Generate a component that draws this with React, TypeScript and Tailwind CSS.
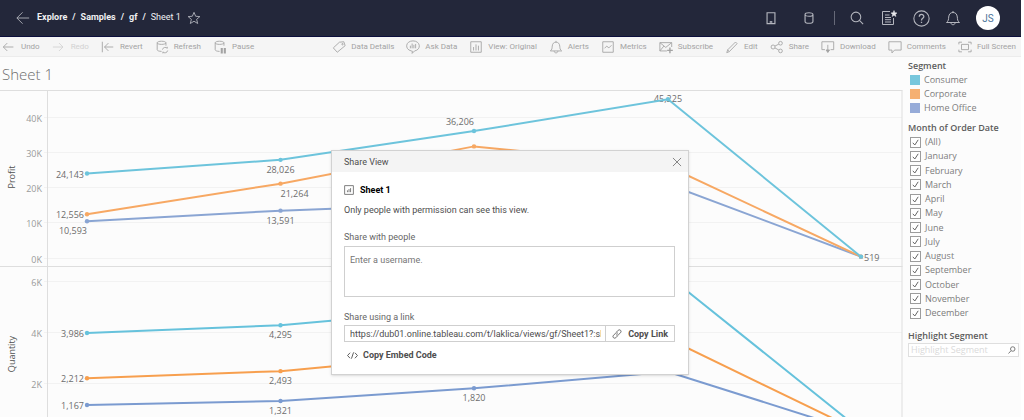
import { ReactNode } from "react";

interface IconProps {
    size?: string;
    stroke?: number;
    children: ReactNode;
}

function Icon({ size = "size-3.5", stroke = 1, children }: IconProps) {
    return (
        <svg
            viewBox="0 0 16 16"
            className={`${size} shrink-0`}
            fill="none"
            stroke="currentColor"
            strokeWidth={stroke}
            aria-hidden="true"
        >
            {children}
        </svg>
    );
}

const bellPath = "M1.5 12.5 C3.5 11 3.5 9.5 3.7 7 C4 4 5.5 2.5 8 2.5 C10.5 2.5 12 4 12.3 7 C12.5 9.5 12.5 11 14.5 12.5 Z M6 12.5 V13 C6 15.3 10 15.3 10 13 V12.5 M8 2.5 V1";
const cylinder = (
    <path d="M7.5 13 C4.5 13 2.5 12.2 2.5 11 V3.2 C2.5 0.8 12.5 0.8 12.5 3.2 V6.5 M2.5 3.2 C2.5 5.6 12.5 5.6 12.5 3.2" />
);

interface ToolItem {
    label: string;
    icon: ReactNode;
    disabled?: boolean;
}

const historyTools: ToolItem[] = [
    { label: "Undo", icon: <path d="M13 8 H1.5 M6 3.5 L1.5 8 L6 12.5" /> },
    { label: "Redo", icon: <path d="M1 8 H12.5 M8 3.5 L12.5 8 L8 12.5" />, disabled: true },
    { label: "Revert", icon: <path d="M1.5 2 V14 M14 8 H4 M8.5 3.5 L4 8 L8.5 12.5" /> },
    {
        label: "Refresh",
        icon: <>{cylinder}<path d="M8.5 11 A3.2 3.2 0 0 1 14 9.5 V7.8 M14.5 12 A3.2 3.2 0 0 1 9 13.6 V15.3" /></>,
    },
    {
        label: "Pause",
        icon: <>{cylinder}<path d="M10 9 V15.5 M13.5 9 V15.5" strokeWidth="2.4" /></>,
    },
];

const viewTools: ToolItem[] = [
    {
        label: "Data Details",
        icon: <><path d="M8.5 2.5 L13.5 2 L15 6.5 L6 14 L1.5 9 Z" /><circle cx="12" cy="4.8" r="0.8" /></>,
    },
    {
        label: "Ask Data",
        icon: <path d="M6 12.5 C-2 10.5 -0.5 1 8 1 C16.5 1 18 11 9.8 12.5 L7 15.3 L7.3 12.8 Z M5 6.5 V9.5 M7 4 V9.5 M9 5.5 V9.5 M11 4.5 V9.5" />,
    },
    {
        label: "View: Original",
        icon: <path d="M2 2 H14 V14 H2 Z M5.2 8 V12 M8 5 V12 M10.8 6.5 V12" />,
    },
    { label: "Alerts", icon: <path d={bellPath} /> },
    { label: "Metrics", icon: <path d="M2 2 H14 V14 H2 Z M4 9.5 L6.5 7 L9 9 L12 6" /> },
    {
        label: "Subscribe",
        icon: <><path d="M9 12.5 H1 V3 H14.5 V8 M1 3 L7.7 8.5 L14.5 3 M1 12.5 L5.5 7" /><path d="M12.5 8.5 V15 M9.3 11.8 H15.8" strokeWidth="1.6" /></>,
    },
    { label: "Edit", icon: <path d="M2 14.5 L3 11.3 L12 2.3 L13.8 4.2 L5 13.2 Z M3 11.3 L5 13.2" /> },
    {
        label: "Share",
        icon: <><circle cx="3.5" cy="8" r="2.3" /><circle cx="12" cy="3.7" r="2.1" /><circle cx="12" cy="12.5" r="2.1" /><path d="M5.7 6.9 L10.1 4.7 M5.6 9 L10.1 11.5" /></>,
    },
    {
        label: "Download",
        icon: <><path d="M4.5 11 H1 V2 H14.5 V11 H11 M7.8 5.5 V14" /><path d="M5.8 11.4 H9.8 L7.8 14.2 Z" fill="currentColor" /></>,
    },
    { label: "Comments", icon: <path d="M1 2 H15 V11.5 H7.5 L4.5 14.8 V11.5 H1 Z" /> },
    {
        label: "Full Screen",
        icon: <path d="M4 5 H12 V11 H4 Z M1 5 V2.5 H4.5 M11.5 2.5 H15 V5 M15 11 V13.5 H11.5 M4.5 13.5 H1 V11" />,
    },
];

function Tool({ label, icon, disabled }: ToolItem) {
    return (
        <button
            type="button"
            disabled={disabled}
            className="flex shrink-0 items-center gap-[5px] text-[#a3a3a3] disabled:text-[#d2d2d2]"
        >
            <Icon>{icon}</Icon>
            {label}
        </button>
    );
}

function TopBar() {
    return (
        <header className="flex h-[37px] items-center border-b border-[#0c0f3c] bg-[#23273a] pl-4 pr-[21px] text-white">
            <button type="button" aria-label="Back" className="text-[#b4b6be]">
                <Icon><path d="M15 8 H1 M7.5 1.5 L1 8 L7.5 14.5" /></Icon>
            </button>
            <nav className="ml-[7px] flex gap-[5px] text-[9px] font-bold text-[#f0f0f2]">
                <a href="#explore">Explore</a>
                <span>/</span>
                <a href="#samples">Samples</a>
                <span>/</span>
                <a href="#gf">gf</a>
                <span>/</span>
                <span className="font-normal">Sheet 1</span>
            </nav>
            <button type="button" aria-label="Favorite" className="ml-1.5 text-[#b4b6be]">
                <Icon><path d="M8 1.5 L9.9 6 L14.7 6.4 L11 9.5 L12.2 14.3 L8 11.7 L3.8 14.3 L5 9.5 L1.3 6.4 L6.1 6 Z" /></Icon>
            </button>
            <div className="ml-auto flex items-center text-[#b4b6be]">
                <button type="button" aria-label="Devices" className="flex w-[38px] justify-center">
                    <Icon><path d="M3.5 2 H12.5 V14.5 H3.5 Z" strokeWidth="1.3" /><path d="M6.5 12.5 H9.5" strokeWidth="1.8" /></Icon>
                </button>
                <button type="button" aria-label="Data source" className="flex w-[38px] justify-center">
                    <Icon><path d="M3.5 4 V12 C3.5 14.7 12.5 14.7 12.5 12 V4 C12.5 1.3 3.5 1.3 3.5 4 C3.5 6.7 12.5 6.7 12.5 4" strokeWidth="1.3" /></Icon>
                </button>
                <span className="mx-1.5 h-3.5 w-px bg-[#666978]" />
                <button type="button" aria-label="Search" className="flex w-8 justify-center">
                    <Icon><circle cx="6.8" cy="6.8" r="5.5" strokeWidth="1.2" /><path d="M10.8 10.8 L15 15" strokeWidth="1.2" /></Icon>
                </button>
                <button type="button" aria-label="What's new" className="flex w-8 justify-center">
                    <Icon size="size-4">
                        <path d="M9 1.5 H1.5 V14.5 H12.5 V8 M4 5 H8.5 M4 7.5 H10 M4 9.7 H10 M4 12 H10" />
                        <path
                            d="M13 0.5 L13.9 2.7 L16 2.9 L14.4 4.3 L14.9 6.5 L13 5.3 L11.1 6.5 L11.6 4.3 L10 2.9 L12.1 2.7 Z"
                            fill="#e8e8ec"
                            stroke="#e8e8ec"
                            strokeWidth="0.5"
                        />
                    </Icon>
                </button>
                <button type="button" aria-label="Help" className="flex w-8 justify-center">
                    <Icon size="size-[17px]">
                        <circle cx="8" cy="8" r="7.2" />
                        <path d="M5.9 6.3 C5.9 3.3 10.2 3.5 10.2 6.1 C10.2 7.8 8 7.9 8 9.8 M8 11 V12.3" strokeWidth="1.2" />
                    </Icon>
                </button>
                <button type="button" aria-label="Notifications" className="flex w-8 justify-center">
                    <Icon size="size-4"><path d={bellPath} /></Icon>
                </button>
                <button
                    type="button"
                    className="ml-[7px] size-6 rounded-full bg-white text-[10px] text-[#4c7499]"
                >
                    JS
                </button>
            </div>
        </header>
    );
}

interface Series {
    color: string;
    values: number[];
    labels?: { index: number; dx: number; dy: number; anchor?: "start" | "middle" | "end" }[];
}

interface Pane {
    title: string;
    titleY: number;
    zeroY: number;
    perThousand: number;
    ticks: number[];
    series: Series[];
}

const monthX = [87, 280.5, 474, 668, 861];

const panes: Pane[] = [
    {
        title: "Profit",
        titleY: 87,
        zeroY: 168.5,
        perThousand: 3.52,
        ticks: [40, 30, 20, 10, 0],
        series: [
            {
                color: "#8aa5d3",
                values: [10593, 13591, 15700, 21100, 519],
                labels: [
                    { index: 0, dx: 0, dy: 13, anchor: "end" },
                    { index: 1, dx: 0, dy: 13 },
                ],
            },
            {
                color: "#f7a863",
                values: [12556, 21264, 31850, 26200, 519],
                labels: [
                    { index: 0, dx: -3, dy: 4, anchor: "end" },
                    { index: 1, dx: 0, dy: 13, anchor: "start" },
                ],
            },
            {
                color: "#6dc4dc",
                values: [24143, 28026, 36206, 45225, 519],
                labels: [
                    { index: 0, dx: -3, dy: 4, anchor: "end" },
                    { index: 1, dx: 0, dy: 13 },
                    { index: 2, dx: 0, dy: -6, anchor: "end" },
                    { index: 3, dx: 0, dy: 3 },
                    { index: 4, dx: 3, dy: 4, anchor: "start" },
                ],
            },
        ],
    },
    {
        title: "Quantity",
        titleY: 264,
        zeroY: 344.7,
        perThousand: 25.5,
        ticks: [6, 4, 2],
        series: [
            {
                color: "#7b9bd0",
                values: [1167, 1321, 1820, 2470, 70],
                labels: [
                    { index: 0, dx: -3, dy: 4, anchor: "end" },
                    { index: 1, dx: 0, dy: 13 },
                    { index: 2, dx: 0, dy: 13 },
                ],
            },
            {
                color: "#f79f4e",
                values: [2212, 2493, 3200, 3772, 105],
                labels: [
                    { index: 0, dx: -3, dy: 4, anchor: "end" },
                    { index: 1, dx: 0, dy: 13 },
                ],
            },
            {
                color: "#66c2dc",
                values: [3986, 4295, 4970, 6235, 170],
                labels: [
                    { index: 0, dx: -3, dy: 4, anchor: "end" },
                    { index: 1, dx: 0, dy: 13 },
                ],
            },
        ],
    },
];

function ChartPane({ pane }: { pane: Pane }) {
    const yOf = (value: number) => pane.zeroY - (value / 1000) * pane.perThousand;

    return (
        <g>
            <text
                transform={`translate(15 ${pane.titleY}) rotate(-90)`}
                textAnchor="middle"
                fill="#4f4f4f"
            >
                {pane.title}
            </text>
            {pane.ticks.map((tick) => (
                <g key={tick}>
                    <path d={`M44 ${Math.round(yOf(tick * 1000)) - 0.5} H902`} stroke="#f2f2f2" />
                    <text x="42" y={yOf(tick * 1000) + 4} textAnchor="end" fill="#9a9a9a">
                        {tick}K
                    </text>
                </g>
            ))}
            {pane.series.map((s) =>
                s.labels?.map((l) => (
                    <text
                        key={s.color + l.index}
                        x={monthX[l.index] + l.dx}
                        y={yOf(s.values[l.index]) + l.dy}
                        textAnchor={l.anchor ?? "middle"}
                        fill="#6c6c6c"
                    >
                        {s.values[l.index].toLocaleString("en-US")}
                    </text>
                ))
            )}
            {pane.series.map((s) => (
                <g key={s.color}>
                    <polyline
                        points={s.values.map((v, i) => `${monthX[i]},${yOf(v)}`).join(" ")}
                        fill="none"
                        stroke={s.color}
                        strokeWidth="2"
                    />
                    {s.values.map((v, i) => (
                        <circle key={i} cx={monthX[i]} cy={yOf(v)} r="2.2" fill={s.color} />
                    ))}
                </g>
            ))}
        </g>
    );
}

function Chart() {
    return (
        <svg
            viewBox="0 0 903 327"
            className="block h-auto w-full font-['Open_Sans','Noto_Sans',sans-serif] text-[9px]"
            role="img"
            aria-label="Profit and Quantity by segment"
        >
            {panes.map((pane) => (
                <ChartPane key={pane.title} pane={pane} />
            ))}
            <path d="M0 0.5 H902.5 M0 176.5 H902.5 M47.5 0.5 V327 M902 0.5 V327" fill="none" stroke="#dedede" />
        </svg>
    );
}

const legend = [
    { name: "Consumer", swatch: "bg-[#78c7dc]" },
    { name: "Corporate", swatch: "bg-[#f5b072]" },
    { name: "Home Office", swatch: "bg-[#96abd8]" },
];

const months = [
    "(All)", "January", "February", "March", "April", "May", "June", "July",
    "August", "September", "October", "November", "December",
];

function Filters() {
    return (
        <aside className="w-[118px] shrink-0 pl-[5px] pt-0.5 font-['Open_Sans','Noto_Sans',sans-serif] text-[9px] leading-[14px] text-[#7c7c7c]">
            <h2 className="font-semibold text-[#5c5c5c]">Segment</h2>
            <ul className="pl-0.5">
                {legend.map((item) => (
                    <li key={item.name} className="flex items-center gap-1">
                        <span className={`size-2.5 ${item.swatch}`} />
                        {item.name}
                    </li>
                ))}
            </ul>
            <fieldset className="mt-1.5">
                <legend className="whitespace-nowrap font-semibold text-[#5c5c5c]">Month of Order Date</legend>
                <div className="flex h-[185px] flex-col justify-between pl-0.5">
                    {months.map((month) => (
                        <label key={month} className="flex items-center gap-1">
                            <span className="grid">
                                <input
                                    type="checkbox"
                                    defaultChecked
                                    className="peer col-start-1 row-start-1 size-[11px] appearance-none border border-[#9c9c9c] bg-white"
                                />
                                <svg
                                    viewBox="0 0 11 11"
                                    className="pointer-events-none invisible col-start-1 row-start-1 size-[11px] text-[#666] peer-checked:visible"
                                    fill="none"
                                    stroke="currentColor"
                                >
                                    <path d="M2.8 5.8 L4.8 8 L8.2 2.8" />
                                </svg>
                            </span>
                            {month}
                        </label>
                    ))}
                </div>
            </fieldset>
            <label htmlFor="highlight" className="mt-[9px] block font-semibold text-[#5c5c5c]">
                Highlight Segment
            </label>
            <div className="mr-0.5 flex h-3.5 items-center border border-[#dfdfdf] bg-white px-0.5">
                <input
                    id="highlight"
                    type="text"
                    placeholder="Highlight Segment"
                    className="min-w-0 flex-1 outline-none placeholder:text-[#dadada]"
                />
                <Icon size="size-2" stroke={2}>
                    <circle cx="9.5" cy="6" r="4.5" />
                    <path d="M6 9.5 L1 15" />
                </Icon>
            </div>
        </aside>
    );
}

function ShareDialog() {
    return (
        <div
            role="dialog"
            aria-labelledby="share-title"
            className="w-[358px] border border-[#d2d2d2] bg-white text-[9px] leading-3 text-[#4e4e4e] shadow-sm"
        >
            <div className="flex h-[21px] items-center justify-between bg-[#f4f4f4] pl-3 pr-1.5">
                <h2 id="share-title">Share View</h2>
                <button type="button" aria-label="Close" className="text-[#777]">
                    <Icon size="size-2.5" stroke={1.4}><path d="M1.5 1.5 L14.5 14.5 M14.5 1.5 L1.5 14.5" /></Icon>
                </button>
            </div>
            <div className="pb-[13px] pl-3 pr-[13px] pt-3">
                <div className="flex items-center gap-1.5 font-bold text-black">
                    <span className="text-[#777]">
                        <Icon size="size-2.5" stroke={1.5}>
                            <path d="M1 1 H15 V15 H1 Z M5.5 8.5 V11.5 M8 6.5 V11.5 M10.5 5 V11.5" />
                        </Icon>
                    </span>
                    Sheet 1
                </div>
                <p className="mt-2">Only people with permission can see this view.</p>
                <label htmlFor="people" className="mt-[15px] block text-[#666]">Share with people</label>
                <textarea
                    id="people"
                    placeholder="Enter a username."
                    className="mt-[3px] block h-[51px] w-full resize-none border border-[#cfcfcf] px-[5px] py-[7px] outline-none placeholder:text-[#757575]"
                />
                <label htmlFor="link" className="mt-3.5 block text-[#666]">Share using a link</label>
                <div className="mt-0.5 flex h-[17px] border border-[#cfcfcf]">
                    <input
                        id="link"
                        type="text"
                        readOnly
                        defaultValue="https://dub01.online.tableau.com/t/laklica/views/gf/Sheet1?:showAppBanner=false"
                        className="ml-[5px] mr-1 min-w-0 flex-1 outline-none"
                    />
                    <button
                        type="button"
                        className="flex w-[69px] items-center justify-between border-l border-[#cfcfcf] px-1.5 font-bold"
                    >
                        <Icon size="size-2.5" stroke={1.3}>
                            <path d="M7 5 L10 2 C12.5 -0.2 16 3.3 13.8 5.8 L10.5 9 C9 10.3 7.3 10 6.3 8.7 M9 11 L6 14 C3.5 16.2 0 12.7 2.2 10.2 L5.5 7 C7 5.7 8.7 6 9.7 7.3" />
                        </Icon>
                        Copy Link
                    </button>
                </div>
                <button type="button" className="ml-[3px] mt-[7px] flex items-center gap-[5px] font-bold">
                    <Icon size="size-[11px]" stroke={1.3}>
                        <path d="M4.5 4 L0.8 8 L4.5 12 M11.5 4 L15.2 8 L11.5 12 M9.5 3.5 L6.5 12.5" />
                    </Icon>
                    Copy Embed Code
                </button>
            </div>
        </div>
    );
}

export default function App() {
    return (
        <div className="relative mr-[3px] bg-[#fcfcfc] font-[Roboto,'Liberation_Sans',sans-serif]">
            <TopBar />
            <div className="flex h-5 items-center justify-between border-b border-[#ececec] bg-[#f5f5f5] pl-0.5 pr-[5px] text-[8px]">
                <div className="flex gap-3">
                    {historyTools.map((tool) => (
                        <Tool key={tool.label} {...tool} />
                    ))}
                </div>
                <div className="flex gap-3">
                    {viewTools.map((tool) => (
                        <Tool key={tool.label} {...tool} />
                    ))}
                </div>
            </div>
            <main className="flex">
                <section className="min-w-0 flex-1">
                    <h1 className="h-[33px] pl-0.5 font-['Open_Sans','Noto_Sans',sans-serif] text-[15px] font-light leading-[34px] text-[#6e6e6e]">
                        Sheet 1
                    </h1>
                    <Chart />
                </section>
                <Filters />
            </main>
            <div className="absolute inset-x-0 top-[150px] flex justify-center pr-px">
                <ShareDialog />
            </div>
        </div>
    );
}
